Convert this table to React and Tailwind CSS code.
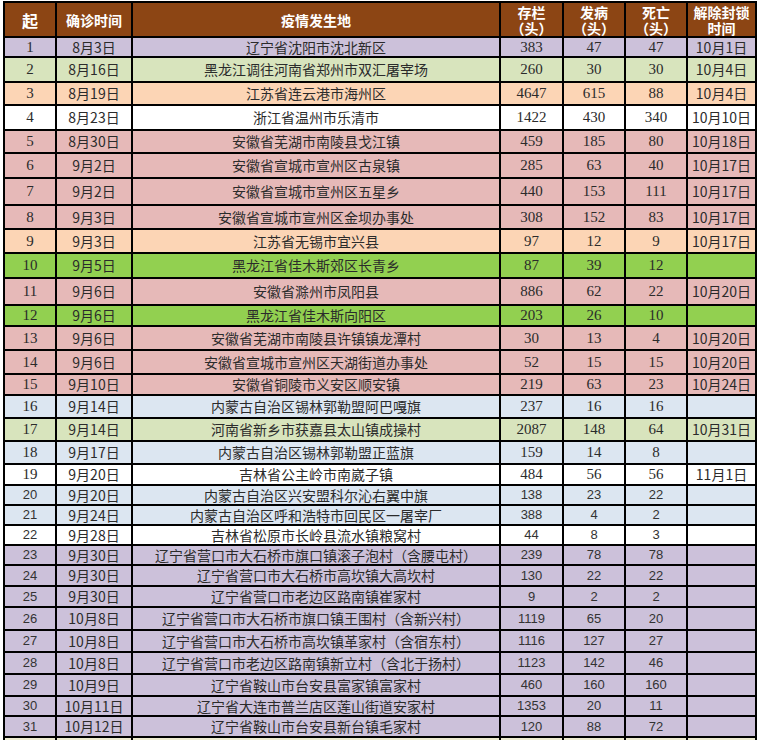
const P = "bg-[#ccc1da]";
const G = "bg-[#d8e4bd]";
const O = "bg-[#fcd5b5]";
const W = "bg-white";
const R = "bg-[#e6b9b8]";
const BG = "bg-[#92d050]";
const B = "bg-[#dce6f1]";

const rows = [
  [1, "8月3日", "辽宁省沈阳市沈北新区", "383", "47", "47", "10月1日", P, "h-[18px]"],
  [2, "8月16日", "黑龙江调往河南省郑州市双汇屠宰场", "260", "30", "30", "10月4日", G, "h-[23px]"],
  [3, "8月19日", "江苏省连云港市海州区", "4647", "615", "88", "10月4日", O, "h-[21px]"],
  [4, "8月23日", "浙江省温州市乐清市", "1422", "430", "340", "10月10日", W, "h-[23px]"],
  [5, "8月30日", "安徽省芜湖市南陵县戈江镇", "459", "185", "80", "10月18日", R, "h-[21px]"],
  [6, "9月2日", "安徽省宣城市宣州区古泉镇", "285", "63", "40", "10月17日", R, "h-[23px]"],
  [7, "9月2日", "安徽省宣城市宣州区五星乡", "440", "153", "111", "10月17日", R, "h-[25px]"],
  [8, "9月3日", "安徽省宣城市宣州区金坝办事处", "308", "152", "83", "10月17日", R, "h-[22px]"],
  [9, "9月3日", "江苏省无锡市宜兴县", "97", "12", "9", "10月17日", O, "h-[22px]"],
  [10, "9月5日", "黑龙江省佳木斯郊区长青乡", "87", "39", "12", "", BG, "h-[23px]"],
  [11, "9月6日", "安徽省滁州市凤阳县", "886", "62", "22", "10月20日", R, "h-[25px]"],
  [12, "9月6日", "黑龙江省佳木斯向阳区", "203", "26", "10", "", BG, "h-[19px]"],
  [13, "9月6日", "安徽省芜湖市南陵县许镇镇龙潭村", "30", "13", "4", "10月20日", R, "h-[22px]"],
  [14, "9月6日", "安徽省宣城市宣州区天湖街道办事处", "52", "15", "15", "10月20日", R, "h-[22px]"],
  [15, "9月10日", "安徽省铜陵市义安区顺安镇", "219", "63", "23", "10月24日", R, "h-[19px]"],
  [16, "9月14日", "内蒙古自治区锡林郭勒盟阿巴嘎旗", "237", "16", "16", "", B, "h-[21px]"],
  [17, "9月14日", "河南省新乡市获嘉县太山镇成操村", "2087", "148", "64", "10月31日", G, "h-[21px]"],
  [18, "9月17日", "内蒙古自治区锡林郭勒盟正蓝旗", "159", "14", "8", "", B, "h-[21px]"],
  [19, "9月20日", "吉林省公主岭市南崴子镇", "484", "56", "56", "11月1日", W, "h-[19px]"],
  [20, "9月20日", "内蒙古自治区兴安盟科尔沁右翼中旗", "138", "23", "22", "", B, "h-[18px]"],
  [21, "9月24日", "内蒙古自治区呼和浩特市回民区一屠宰厂", "388", "4", "2", "", B, "h-[18px]"],
  [22, "9月28日", "吉林省松原市长岭县流水镇粮窝村", "44", "8", "3", "", W, "h-[18px]"],
  [23, "9月30日", "辽宁省营口市大石桥市旗口镇滚子泡村（含腰屯村）", "239", "78", "78", "", P, "h-[18px]"],
  [24, "9月30日", "辽宁省营口市大石桥市高坎镇大高坎村", "130", "22", "22", "", P, "h-[19px]"],
  [25, "9月30日", "辽宁省营口市老边区路南镇崔家村", "9", "2", "2", "", P, "h-[19px]"],
  [26, "10月8日", "辽宁省营口市大石桥市旗口镇王围村（含新兴村）", "1119", "65", "20", "", P, "h-[21px]"],
  [27, "10月8日", "辽宁省营口市大石桥市高坎镇革家村（含宿东村）", "1116", "127", "27", "", P, "h-[20px]"],
  [28, "10月8日", "辽宁省营口市老边区路南镇新立村（含北于扬村）", "1123", "142", "46", "", P, "h-[20px]"],
  [29, "10月9日", "辽宁省鞍山市台安县富家镇富家村", "460", "160", "160", "", P, "h-[20px]"],
  [30, "10月11日", "辽宁省大连市普兰店区莲山街道安家村", "1353", "20", "11", "", P, "h-[18px]"],
  [31, "10月12日", "辽宁省鞍山市台安县新台镇毛家村", "120", "88", "72", "", P, "h-[19px]"],
];

const grid = "grid grid-cols-[50px_74px_366px_61px_60px_60px_67px] gap-[2px]";
const cjk = "font-['Noto_Sans_CJK_SC',sans-serif]";

function Head({ children }) {
  return (
    <div className={`bg-[#8c4514] text-white font-bold text-[14px] leading-[16px] flex items-center justify-center text-center ${cjk}`}>
      {children}
    </div>
  );
}

function Cell({ bg, className = "", children }) {
  return (
    <div className={`${bg} flex items-center justify-center whitespace-nowrap overflow-hidden text-[#2b2b2b] ${className}`}>
      {children}
    </div>
  );
}

export default function App() {
  return (
    <div className="w-[760px] h-[740px] overflow-hidden bg-white pt-[1px] pl-[3px]">
      <div className="w-[754px] bg-black p-[2px] flex flex-col gap-[2px]">
        {/* header */}
        <div className={`${grid} h-[33px]`}>
          <Head>
            <span className="text-[16px]">起</span>
          </Head>
          <Head>确诊时间</Head>
          <Head>疫情发生地</Head>
          <Head>存栏<br />（头）</Head>
          <Head>发病<br />（头）</Head>
          <Head>死亡<br />（头）</Head>
          <Head>解除封锁<br />时间</Head>
        </div>
        {rows.map((r) => {
          const [no, date, place, a, b, c, end, bg, h] = r;
          const num = no <= 19
            ? "font-['Liberation_Serif',serif] text-[15px]"
            : "font-['Liberation_Sans',sans-serif] text-[13px] text-[#333]";
          return (
            <div key={no} className={`${grid} ${h}`}>
              <Cell bg={bg} className={num}>{no}</Cell>
              <Cell bg={bg} className={`${cjk} text-[14px]`}>{date}</Cell>
              <Cell bg={bg} className={`${cjk} text-[14px]`}>{place}</Cell>
              <Cell bg={bg} className={num}>{a}</Cell>
              <Cell bg={bg} className={num}>{b}</Cell>
              <Cell bg={bg} className={num}>{c}</Cell>
              <Cell bg={bg} className={`${cjk} text-[14px]`}>{end}</Cell>
            </div>
          );
        })}
        {/* next row, cut off at the bottom */}
        <div className={`${grid} h-[20px]`}>
          {[0, 1, 2, 3, 4, 5, 6].map((i) => (
            <div key={i} className="bg-[#eeecd0]" />
          ))}
        </div>
      </div>
    </div>
  );
}
